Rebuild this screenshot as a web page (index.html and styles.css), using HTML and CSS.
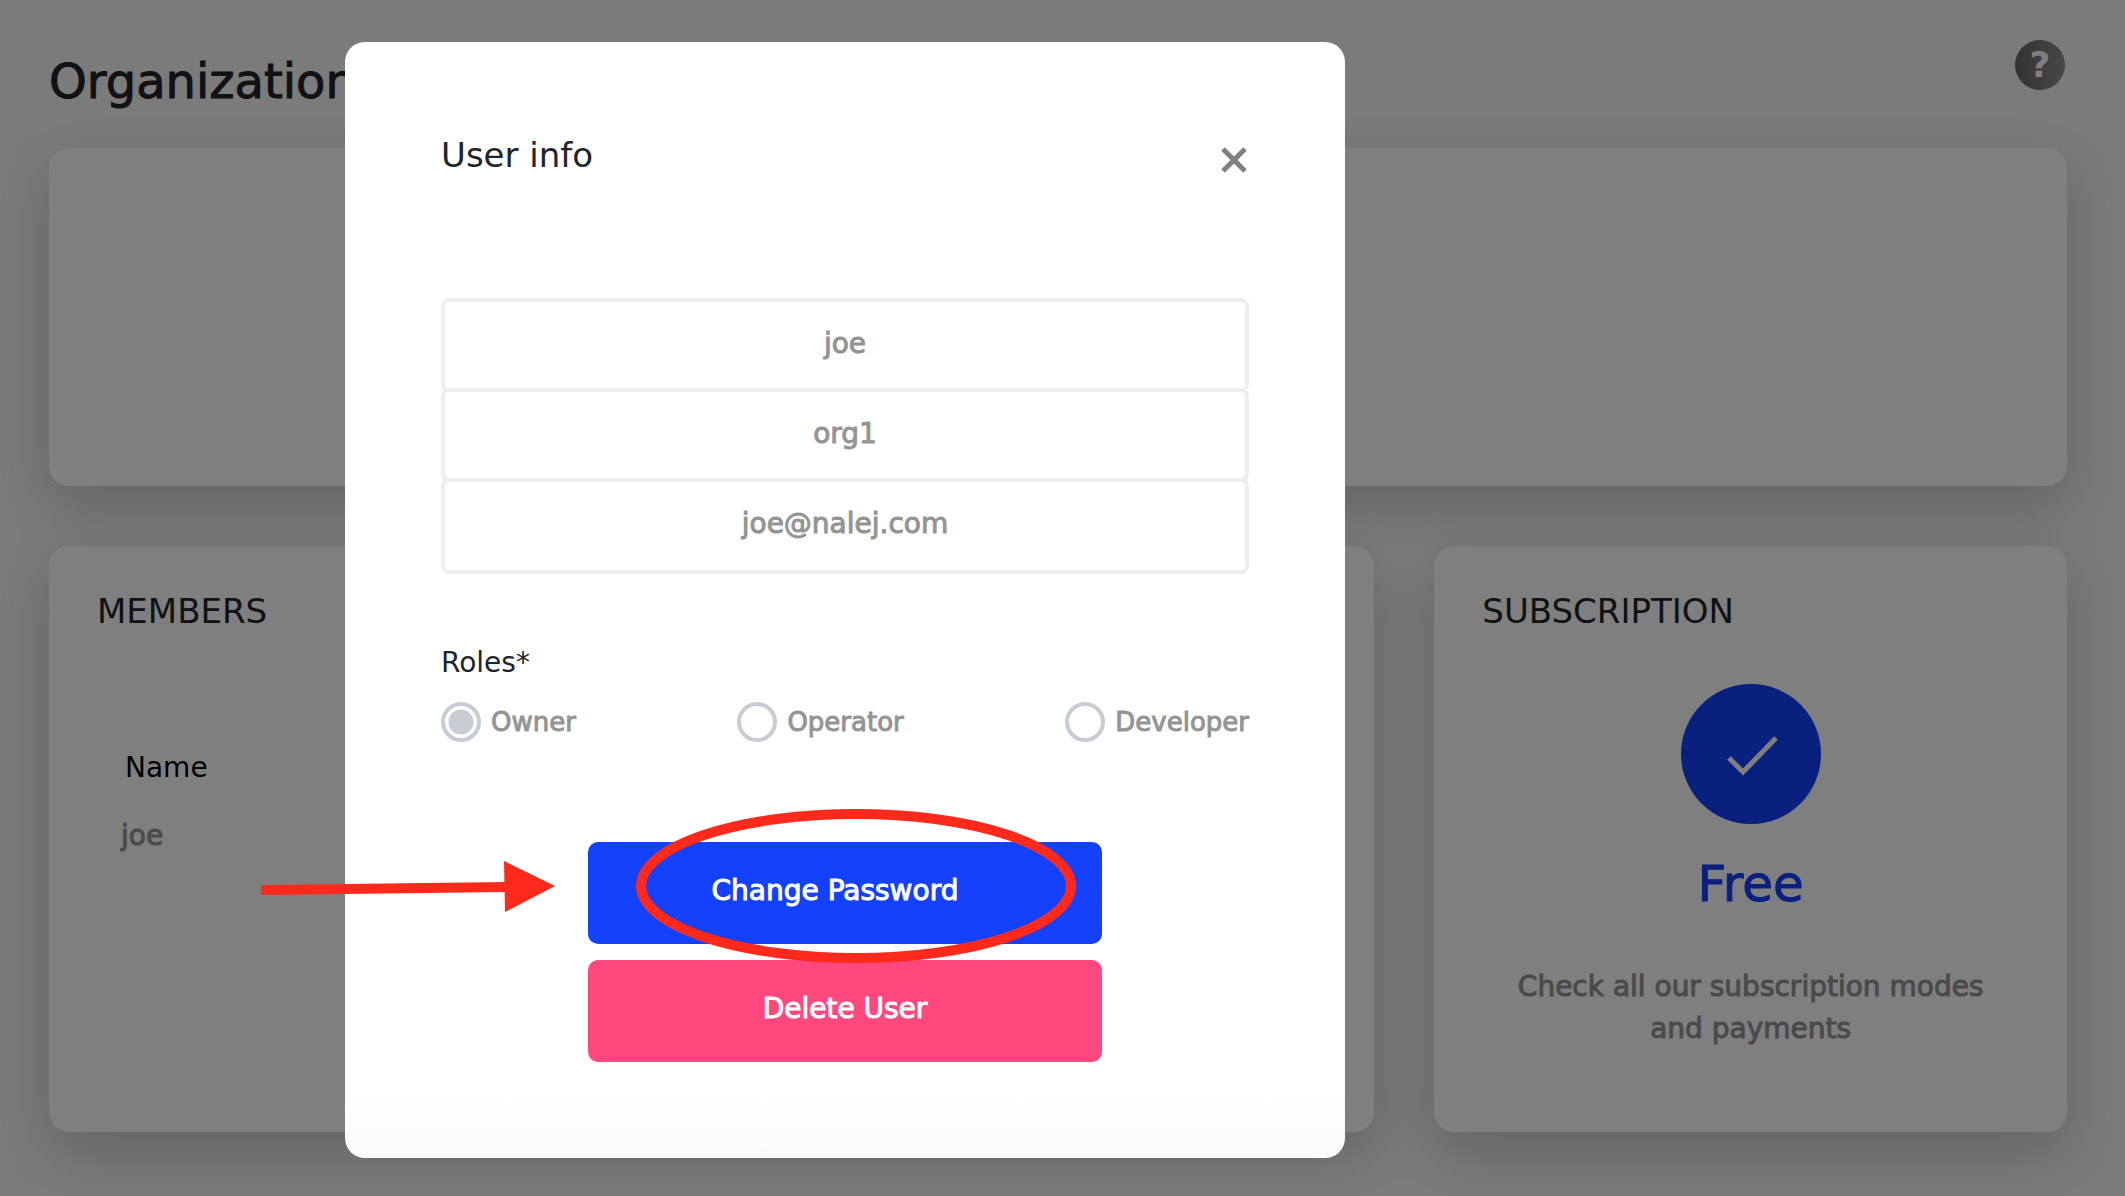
FILE: index.html
```html
<!DOCTYPE html>
<html lang="en">
<head>
  <meta charset="utf-8">
  <meta name="viewport" content="width=device-width, initial-scale=1">
  <title>Organization</title>
  <link rel="stylesheet" href="styles.css">
</head>
<body>
  <main class="page">
    <header class="page-header">
      <h1 class="page-title">Organization</h1>
      <button class="help" type="button" aria-label="Help">?</button>
    </header>
    <div class="cards">
      <section class="card card-summary"></section>
      <section class="card card-members">
        <h2 class="card-title">MEMBERS</h2>
        <table class="members">
          <thead><tr><th scope="col">Name</th></tr></thead>
          <tbody><tr><td>joe</td></tr></tbody>
        </table>
      </section>
      <section class="card card-subscription">
        <h2 class="card-title">SUBSCRIPTION</h2>
        <div class="plan">
          <svg class="plan-icon" viewBox="0 0 140 140" aria-hidden="true">
            <circle cx="70" cy="70" r="70" fill="#1441fc"/>
            <path d="M48 74 L62 88 L95 54" fill="none" stroke="#fff" stroke-width="5"/>
          </svg>
          <p class="plan-name">Free</p>
          <p class="plan-text">Check all our subscription modes and payments</p>
        </div>
      </section>
    </div>
  </main>

  <div class="overlay">
    <div class="modal" role="dialog" aria-modal="true" aria-labelledby="modal-title">
      <header class="modal-header">
        <h2 class="modal-title" id="modal-title">User info</h2>
        <button class="close" type="button" aria-label="Close">
          <svg class="close-icon" viewBox="0 0 26 26" aria-hidden="true">
            <path d="M2 2 L24 24 M24 2 L2 24" stroke="#808080" stroke-width="5"/>
          </svg>
        </button>
      </header>
      <form class="form">
        <div class="fields">
          <input class="field" type="text" value="joe" aria-label="Name" readonly>
          <input class="field" type="text" value="org1" aria-label="Organization" readonly>
          <input class="field" type="email" value="joe@nalej.com" aria-label="Email" readonly>
        </div>
        <fieldset class="roles">
          <legend class="roles-title">Roles*</legend>
          <div class="roles-row">
            <label class="role"><input class="radio" type="radio" name="role" checked>Owner</label>
            <label class="role"><input class="radio" type="radio" name="role">Operator</label>
            <label class="role"><input class="radio" type="radio" name="role">Developer</label>
          </div>
        </fieldset>
        <div class="actions">
          <button class="button button-primary" type="button">Change Password</button>
          <button class="button button-danger" type="button">Delete User</button>
        </div>
      </form>
      <svg class="callout" viewBox="0 0 820 160" aria-hidden="true">
        <path d="M0 83 L246 80" stroke="#ff2a1c" stroke-width="10"/>
        <path d="M243 54 L294 79 L244 105 Z" fill="#ff2a1c"/>
        <ellipse cx="595" cy="79" rx="215" ry="72" fill="none" stroke="#ff2a1c" stroke-width="10"/>
      </svg>
    </div>
  </div>
</body>
</html>
```
FILE: styles.css
```css
* {
  box-sizing: border-box;
}

body {
  margin: 0;
  min-height: 100vh;
  overflow: hidden;
  background: #f7f7f7;
  color: #212529;
  font: 400 28px/42px "DejaVu Sans", sans-serif;
}

h1, h2, p {
  margin: 0;
  font-weight: 400;
}

button, input {
  font: inherit;
}

.page {
  padding: 40px 58px 64px 49px;
}

.page-header {
  display: flex;
  justify-content: space-between;
  align-items: flex-start;
  margin-bottom: 26px;
}

.page-title {
  font-size: 48px;
  line-height: 82px;
  -webkit-text-stroke: 1px;
}

.help {
  width: 50px;
  height: 50px;
  margin-right: 2px;
  padding: 0;
  border: 0;
  border-radius: 50%;
  background: linear-gradient(90deg, #666, #909090);
  color: #fff;
  font-size: 36px;
  font-weight: 700;
  line-height: 50px;
}

.cards {
  display: grid;
  grid-template-columns: repeat(3, 1fr);
  gap: 60px;
}

.card {
  padding: 40px 48px 82px;
  border-radius: 20px;
  background: #fff;
  box-shadow: 0 20px 60px rgba(0, 0, 0, 0.2);
}

.card-summary {
  grid-column: 1 / -1;
  min-height: 338px;
}

.card-members {
  grid-column: span 2;
}

.card-title {
  font-size: 34px;
  line-height: 50px;
}

.members {
  margin-top: 98px;
  border-collapse: collapse;
  text-align: left;
}

.members th,
.members td {
  padding: 13px 28px;
  font-weight: 400;
}

.members th {
  color: #000;
}

.members td {
  padding-left: 24px;
}

.members td,
.plan-text,
.field,
.role {
  color: #949494;
  -webkit-text-stroke: 1px;
}

.plan {
  display: flex;
  flex-direction: column;
  align-items: center;
  margin-top: 48px;
  text-align: center;
}

.plan-icon {
  width: 140px;
  height: 140px;
}

.plan-name {
  margin: 24px 0 46px;
  color: #1441fc;
  font-size: 50px;
  line-height: 72px;
  -webkit-text-stroke: 1px;
}

.plan-text {
  padding: 0 24px;
}

.overlay {
  position: fixed;
  inset: 0;
  display: flex;
  align-items: flex-start;
  padding: 42px 0 0 345px;
  background: rgba(0, 0, 0, 0.5);
}

.modal {
  position: relative;
  width: 1000px;
  padding: 88px 96px 96px;
  border-radius: 20px;
  background: linear-gradient(#fff 94%, #fafafa);
}

.modal-header {
  display: flex;
  justify-content: space-between;
  align-items: center;
}

.modal-title {
  font-size: 34px;
  line-height: 50px;
}

.close {
  display: flex;
  padding: 10px 2px 0 0;
  border: 0;
  background: none;
}

.close-icon {
  width: 26px;
  height: 26px;
}

.fields {
  display: grid;
  margin-top: 118px;
}

.field {
  width: 100%;
  height: 94px;
  padding: 0 0 4px;
  border: 4px solid #eee;
  border-radius: 8px;
  background: #fff;
  text-align: center;
}

.field + .field {
  margin-top: -4px;
}

.field:last-child {
  height: 96px;
  padding-bottom: 6px;
}

.roles {
  margin: 68px 0 0;
  padding: 0;
  border: 0;
}

.roles-title {
  padding: 0;
}

.roles-row {
  display: flex;
  justify-content: space-between;
  margin-top: 18px;
}

.role {
  display: flex;
  align-items: center;
  gap: 10px;
  font-size: 26px;
  line-height: 40px;
}

.radio {
  width: 40px;
  height: 40px;
  margin: 0;
  border: 4px solid #c8ccd4;
  border-radius: 50%;
  appearance: none;
}

.radio:checked {
  background: radial-gradient(circle, #c8ccd4 12px, #fff 13px);
}

.actions {
  display: grid;
  gap: 16px;
  width: 514px;
  margin: 100px auto 0;
}

.button {
  height: 102px;
  border: 0;
  border-radius: 10px;
  color: #fff;
  -webkit-text-stroke: 1px;
}

.button-primary {
  padding: 0 20px 4px 0;
  background: #1441fc;
}

.button-danger {
  padding: 0 0 4px;
  background: #ff487d;
}

.callout {
  position: absolute;
  left: -84px;
  top: 765px;
  width: 820px;
  height: 160px;
}
```
